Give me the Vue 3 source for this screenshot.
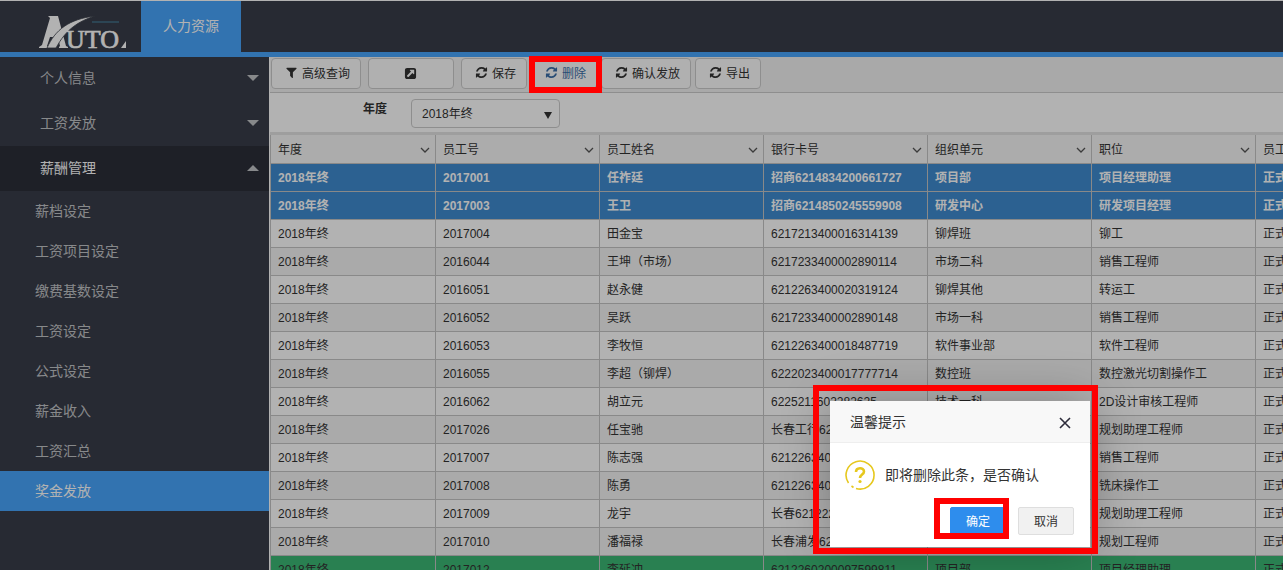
<script setup>
import { ref } from 'vue'

const menus = [
  { name: '个人信息', open: false },
  { name: '工资发放', open: false },
  { name: '薪酬管理', open: true }
]
const subMenus = ['薪档设定', '工资项目设定', '缴费基数设定', '工资设定', '公式设定', '薪金收入', '工资汇总', '奖金发放']
const activeSub = ref('奖金发放')
const year = ref('2018年终')

const icons = {
  filter: 'M1595 295q17 41-14 70l-493 493v742q0 42-39 59-13 5-25 5-27 0-45-19l-256-256q-19-19-19-45v-486l-493-493q-31-29-14-70 17-39 59-39h1280q42 0 59 39z',
  refresh: 'M1639 1056q0 5-1 7-64 268-268 434.5t-478 166.5q-146 0-282.5-55t-243.5-157l-129 129q-19 19-45 19t-45-19-19-45v-448q0-26 19-45t45-19h448q26 0 45 19t19 45-19 45l-137 137q71 66 161 102t187 36q134 0 250-65t186-179q11-17 53-117 8-23 30-23h192q13 0 22.5 9.5t9.5 22.5zm25-800v448q0 26-19 45t-45 19h-448q-26 0-45-19t-19-45 19-45l138-138q-148-137-349-137-134 0-250 65t-186 179q-11 17-53 117-8 23-30 23h-199q-13 0-22.5-9.5t-9.5-22.5v-7q65-268 270-434.5t480-166.5q146 0 284 55.5t245 156.5l130-129q19-19 45-19t45 19 19 45z',
  link: 'M1408 928v-480q0-26-19-45t-45-19h-480q-42 0-59 39-17 41 14 70l144 144-534 534q-19 19-19 45t19 45l102 102q19 19 45 19t45-19l534-534 144 144q18 19 45 19 12 0 25-5 39-17 39-59zm256-512v960q0 119-84.5 203.5t-203.5 84.5h-960q-119 0-203.5-84.5t-84.5-203.5v-960q0-119 84.5-203.5t203.5-84.5h960q119 0 203.5 84.5t84.5 203.5z'
}
const tools = [
  { text: '高级查询', icon: 'filter' },
  { text: '', icon: 'link', wide: true },
  { text: '保存', icon: 'refresh' },
  { text: '删除', icon: 'refresh', marked: true },
  { text: '确认发放', icon: 'refresh' },
  { text: '导出', icon: 'refresh' }
]

const columns = ['年度', '员工号', '员工姓名', '银行卡号', '组织单元', '职位', '员工']
const rows = [
  ['2017001', '任祚廷', '招商6214834200661727', '项目部', '项目经理助理', 'selected'],
  ['2017003', '王卫', '招商6214850245559908', '研发中心', '研发项目经理', 'selected'],
  ['2017004', '田金宝', '6217213400016314139', '铆焊班', '铆工'],
  ['2016044', '王坤（市场）', '6217233400002890114', '市场二科', '销售工程师'],
  ['2016051', '赵永健', '6212263400020319124', '铆焊其他', '转运工'],
  ['2016052', '吴跃', '6217233400002890148', '市场一科', '销售工程师'],
  ['2016053', '李牧恒', '6212263400018487719', '软件事业部', '软件工程师'],
  ['2016055', '李超（铆焊）', '6222023400017777714', '数控班', '数控激光切割操作工'],
  ['2016062', '胡立元', '6225211602282625', '技术一科', '2D设计审核工程师'],
  ['2017026', '任宝驰', '长春工行622', '', '规划助理工程师'],
  ['2017007', '陈志强', '6212263400', '', '销售工程师'],
  ['2017008', '陈勇', '6212263400', '', '铣床操作工'],
  ['2017009', '龙宇', '长春621222', '', '规划助理工程师'],
  ['2017010', '潘福禄', '长春浦发622', '', '规划工程师'],
  ['2017012', '李延冲', '6212260200097599811', '项目部', '项目经理助理', 'paid']
].map(([no, name, card, unit, post, state]) => ({
  no,
  state,
  cells: ['2018年终', no, name, card, unit, post, '正式']
}))
</script>

<template>
  <div class="app">
    <header class="top">
      <svg class="logo" viewBox="0 0 90 36" role="img" aria-label="AUTO">
        <path d="M10 2h10l8 30 2 1v1h-9v-1l1-1-2-9h-8l-3 9 2 1v1H1v-1l3-2 8-27z" fill="#fff" />
        <path d="M9 34C17 16 31 5 57 2 41 7 28 15 18 34z" fill="#fff" stroke="#393d49" stroke-width="0.800" />
        <text x="28" y="34" class="logo-text">UTO</text>
        <path d="M83 34l5-7v7z" fill="#fff" />
        <path d="M54 8h27" stroke="#3f6479" stroke-width="2" />
      </svg>
      <a class="tab" href="#">人力资源</a>
    </header>

    <div class="body">
      <nav class="side">
        <button v-for="m in menus" :key="m.name" type="button" class="menu" :class="{ open: m.open }">
          {{ m.name }}<i class="caret"></i>
        </button>
        <a
          v-for="s in subMenus"
          :key="s"
          href="#"
          class="sub"
          :class="{ active: s === activeSub }"
          @click.prevent="activeSub = s"
        >{{ s }}</a>
      </nav>

      <main class="main">
        <div class="toolbar">
          <div v-for="t in tools" :key="t.text" class="tool" :class="{ wide: t.wide, marked: t.marked }">
            <button type="button" class="btn" :aria-label="t.text || '打开'">
              <svg class="ico" viewBox="0 0 1792 1792"><path :d="icons[t.icon]" /></svg>
              <span>{{ t.text }}</span>
            </button>
            <span v-if="t.marked" class="mark mark-tool"></span>
          </div>
        </div>

        <div class="filter">
          <label for="year">年度</label>
          <div class="pick">
            <select id="year" v-model="year">
              <option>2018年终</option>
            </select>
            <svg class="drop" viewBox="0 0 8 7"><path d="M0 0h8L4 7z" /></svg>
          </div>
        </div>

        <div class="grid">
          <table>
            <thead>
              <tr>
                <th v-for="c in columns" :key="c" scope="col">
                  <div class="head">
                    {{ c }}
                    <svg class="chev" viewBox="0 0 10 6"><path d="M1 1l4 4 4-4" /></svg>
                  </div>
                </th>
              </tr>
            </thead>
            <tbody>
              <tr v-for="r in rows" :key="r.no" :class="r.state">
                <td v-for="(c, i) in r.cells" :key="i">{{ c }}</td>
              </tr>
            </tbody>
          </table>
        </div>
      </main>
    </div>

    <div class="shade"></div>

    <section class="dialog" role="dialog" aria-labelledby="dlg-title">
      <div class="dlg-head">
        <h2 id="dlg-title">温馨提示</h2>
        <button type="button" class="close" aria-label="关闭">
          <svg viewBox="0 0 12 12"><path d="M1 1l10 10M11 1L1 11" /></svg>
        </button>
      </div>
      <div class="dlg-body">
        <svg class="ask" viewBox="0 0 30 30">
          <path d="M3.500 23A14 14 0 1 1 11 28.500M8.500 27.500l-2-1.500" fill="none" stroke="#e6c81e" stroke-width="1.600" />
          <path d="M11 12c0-5 8-5 8-.5 0 3-4 3-4 6.500" fill="none" stroke="#e6c81e" stroke-width="2.600" />
          <circle cx="15" cy="21.500" r="1.600" fill="#e6c81e" />
        </svg>
        <p>即将删除此条，是否确认</p>
      </div>
      <div class="dlg-foot">
        <div class="ok-wrap">
          <button type="button" class="act ok">确定</button>
          <span class="mark mark-ok"></span>
        </div>
        <button type="button" class="act">取消</button>
      </div>
      <span class="mark mark-dialog"></span>
    </section>
  </div>
</template>

<style>
body {
  margin: 0;
  overflow: hidden;
}
</style>

<style scoped>
.app {
  position: relative;
  display: flex;
  flex-direction: column;
  height: 100vh;
  overflow: hidden;
  font: 12px/18px "Liberation Sans", "Noto Sans CJK SC", sans-serif;
  color: #333;
  background: #fff;
}
.app * {
  box-sizing: border-box;
}
button,
select {
  font: inherit;
  color: inherit;
  margin: 0;
  cursor: pointer;
}
a {
  text-decoration: none;
}

.top {
  position: relative;
  z-index: 1;
  display: flex;
  flex: none;
  height: 57px;
  background: #393d49;
  border-top: 1px solid #fff;
  border-bottom: 5px solid #48a5fd;
}
.logo {
  width: 90px;
  height: 36px;
  margin: 13px 13px 0 38px;
}
.logo-text {
  font: 26px "Liberation Serif", serif;
  fill: #fff;
  stroke: #fff;
  stroke-width: 0.7px;
}
.tab {
  width: 100px;
  background: #48a5fd;
  color: #fff;
  font-size: 14px;
  line-height: 50px;
  text-align: center;
}

.body {
  display: flex;
  flex: 1;
  min-height: 0;
}
.side {
  flex: none;
  width: 269px;
  margin-top: -1px;
  background: #393d49;
  font-size: 14px;
}
.menu {
  display: flex;
  align-items: center;
  justify-content: space-between;
  width: 100%;
  height: 45px;
  padding: 0 10px 2px 40px;
  border: 0;
  background: none;
  color: #c2c4c8;
}
.menu.open {
  background: #2b2e39;
  color: #fff;
}
.caret {
  border: 6px solid transparent;
  border-top-color: #c2c4c8;
  border-bottom-width: 0;
}
.open .caret {
  border-width: 0 6px 6px;
  border-bottom-color: #c2c4c8;
}
.sub {
  display: block;
  padding-left: 35px;
  line-height: 40px;
  color: #c2c4c8;
}
.sub.active {
  background: #48a5fd;
  color: #fff;
}

.main {
  flex: 1;
  min-width: 0;
  padding-left: 1px;
}
.toolbar {
  display: flex;
  gap: 4px;
  height: 36px;
  padding: 1px;
  background: #f3f3f3;
  border-bottom: 1px solid #ccc;
}
.tool {
  position: relative;
}
.btn {
  display: flex;
  align-items: center;
  gap: 5px;
  height: 31px;
  padding: 0 10px 0 13px;
  border: 1px solid #ccc;
  border-radius: 4px;
  background: #fcfcfc;
  white-space: nowrap;
}
.wide {
  margin: 0 3px;
}
.wide .btn {
  width: 86px;
  justify-content: center;
}
.marked .btn {
  color: #3a6ea8;
}
.ico {
  width: 13px;
  height: 13px;
  margin: 0 -1px 3px 0;
  fill: currentColor;
}
.wide .ico {
  margin-bottom: 0;
}

.filter {
  display: flex;
  gap: 24px;
  height: 42px;
  padding: 6px 0 0 93px;
  border-bottom: 3px solid #e2e2e2;
}
.filter label {
  font-weight: bold;
  line-height: 20px;
}
.pick {
  position: relative;
}
select {
  width: 149px;
  height: 29px;
  padding: 0 10px;
  border: 1px solid #ccc;
  border-radius: 4px;
  background: #fff;
  appearance: none;
}
.drop {
  position: absolute;
  right: 8px;
  top: 13px;
  width: 8px;
  height: 7px;
  fill: #333;
  pointer-events: none;
}

.grid {
  overflow: hidden;
  border-left: 1px solid #c4c4c4;
}
table {
  width: 1149px;
  table-layout: fixed;
  border-collapse: separate;
  border-spacing: 0;
}
th,
td {
  width: 164px;
  height: 28px;
  padding: 0 7px;
  border-right: 1px solid #c4c4c4;
  border-bottom: 1px solid #c4c4c4;
  overflow: hidden;
  text-align: left;
  white-space: nowrap;
}
th:first-child {
  width: 165px;
}
th {
  height: 29px;
  padding-top: 2px;
  background: #f7f7f7;
  font-weight: normal;
}
.head {
  display: flex;
  align-items: center;
  justify-content: space-between;
}
.chev {
  width: 10px;
  height: 6px;
  margin-right: -2px;
  fill: none;
  stroke: #555;
  stroke-width: 1.3;
}
tbody tr:nth-child(even) {
  background: #f4f4f4;
}
tbody tr.selected {
  background: #3f8cd0;
  color: #fff;
  font-weight: bold;
}
tbody tr.paid {
  background: #3cb875;
}

.shade {
  position: absolute;
  z-index: 10;
  inset: 0;
  background: rgba(0, 0, 0, 0.3);
}
.mark {
  position: absolute;
  z-index: 20;
  border: 6px solid #f00;
  pointer-events: none;
}
.mark-tool {
  inset: -2px -5px -2px -2px;
}

.dialog {
  position: absolute;
  z-index: 15;
  right: 193px;
  bottom: 23px;
  width: 260px;
  background: #fff;
  box-shadow: 1px 1px 50px rgba(0, 0, 0, 0.3);
  font-size: 14px;
}
.mark-dialog {
  inset: -16px -8px -7px -17px;
}
.dlg-head {
  display: flex;
  align-items: center;
  justify-content: space-between;
  height: 42px;
  padding: 0 19px 0 20px;
  background: #f8f8f8;
  border-bottom: 1px solid #eee;
}
h2 {
  margin: 0;
  font-size: 14px;
  font-weight: normal;
}
.close {
  display: flex;
  padding: 2px 0 0;
  border: 0;
  background: none;
}
.close svg {
  width: 12px;
  height: 12px;
  fill: none;
  stroke: #2d2c3b;
  stroke-width: 1.6;
}
.dlg-body {
  display: flex;
  align-items: center;
  gap: 10px;
  height: 64px;
  padding-left: 15px;
}
.ask {
  width: 30px;
  height: 30px;
}
p {
  margin: 0;
}
.dlg-foot {
  display: flex;
  justify-content: flex-end;
  gap: 12px;
  padding: 0 16px 12px 0;
}
.ok-wrap {
  position: relative;
}
.act {
  height: 28px;
  padding: 2px 15px 0;
  border: 1px solid #dedede;
  border-radius: 2px;
  background: #f1f1f1;
  font-size: 12px;
}
.ok {
  background: #2e8ded;
  border-color: #2e8ded;
  color: #fff;
}
.mark-ok {
  inset: -9px -3px -4px -16px;
}
</style>
